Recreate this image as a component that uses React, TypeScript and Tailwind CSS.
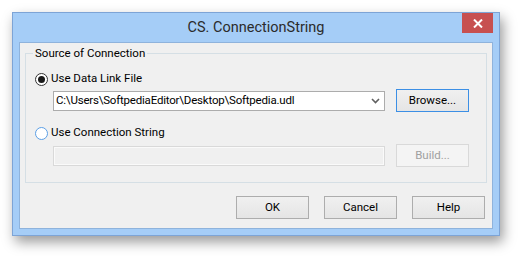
import React from "react";

const font = { fontFamily: 'Roboto, "Noto Sans", sans-serif' };

const Button = ({
  label,
  focused,
  disabled,
  className = "",
}: {
  label: string;
  focused?: boolean;
  disabled?: boolean;
  className?: string;
}) => (
  <button
    className={
      "w-[73px] h-[23px] text-[11.5px] leading-none flex items-center justify-center border " +
      (disabled
        ? "border-[#d9d9d9] bg-[#f4f4f4] text-[#a0a0a0] "
        : focused
        ? "border-[#3c8fe5] bg-gradient-to-b from-[#f0f0f0] to-[#e5e5e5] text-black "
        : "border-[#adadad] bg-gradient-to-b from-[#f0f0f0] to-[#e5e5e5] text-black ") +
      className
    }
  >
    {label}
  </button>
);

const Radio = ({ checked, label }: { checked?: boolean; label: string }) => (
  <label className="flex items-center h-[16px]">
    <span
      className={
        "w-[13px] h-[13px] rounded-full border bg-white flex items-center justify-center " +
        (checked ? "border-[#333333]" : "border-[#5b9fe6]")
      }
    >
      {checked && <span className="w-[7px] h-[7px] rounded-full bg-[#1a1a1a]" />}
    </span>
    <span className="ml-[3px] text-[11.5px] text-black">{label}</span>
  </label>
);

export default function App() {
  return (
    <div className="w-[520px] h-[256px] bg-white pt-[12px] pl-[12px]" style={font}>
      <div className="w-[488px] h-[224px] border border-[#7da4d6] bg-[#a5cdf7] flex flex-col shadow-[3px_6px_12px_rgba(0,0,0,0.4)]">
        {/* title bar */}
        <div className="relative h-[29px] flex items-center justify-center">
          <span className="text-[14.5px] text-[#2b2b2b] mt-[1px]">CS. ConnectionString</span>
          <div className="absolute right-[6px] top-0 w-[31px] h-[20px] bg-[#c75050] flex items-center justify-center">
            <svg width="10" height="9" viewBox="0 0 10 9">
              <path d="M1 0.5 L9 8.5 M9 0.5 L1 8.5" stroke="white" strokeWidth="2" />
            </svg>
          </div>
        </div>

        {/* client area */}
        <div className="flex-1 mx-[6px] mb-[6px] border border-[#8fb3dc] bg-[#f0f0f0] px-[5px] flex flex-col">
          <fieldset className="mt-[2px] h-[138px] border border-[#d5dfe5] pl-[9px] pr-[16px]">
            <legend className="-ml-[2px] px-[2px] text-[11.5px] leading-[16px] text-black">
              Source of Connection
            </legend>
            <div className="mt-[10px]">
              <Radio checked label="Use Data Link File" />
            </div>
            <div className="mt-[2px] ml-[18px] flex items-center">
              <div className="w-[332px] h-[20px] border border-[#acacac] bg-white flex items-center pl-[2px] pr-[4px]">
                <span className="flex-1 text-[11.5px] tracking-[-0.2px] text-black whitespace-nowrap">
                  C:\Users\SoftpediaEditor\Desktop\Softpedia.udl
                </span>
                <svg width="9" height="6" viewBox="0 0 9 6">
                  <path d="M1 1 L4.5 4.5 L8 1" stroke="#606060" strokeWidth="1.6" fill="none" />
                </svg>
              </div>
              <Button label="Browse..." focused className="ml-[11px]" />
            </div>
            <div className="mt-[13px]">
              <Radio label="Use Connection String" />
            </div>
            <div className="mt-[3px] ml-[18px] flex items-center">
              <div className="w-[332px] h-[20px] border border-[#d9d9d9] bg-[#f0f0f0] shadow-[inset_0_0_0_1px_#fafafa]" />
              <Button label="Build..." disabled className="ml-[11px] h-[22px]" />
            </div>
          </fieldset>

          <div className="mt-[13px] flex justify-end gap-[15px] pr-[2px]">
            <Button label="OK" />
            <Button label="Cancel" />
            <Button label="Help" />
          </div>
        </div>
      </div>
    </div>
  );
}
